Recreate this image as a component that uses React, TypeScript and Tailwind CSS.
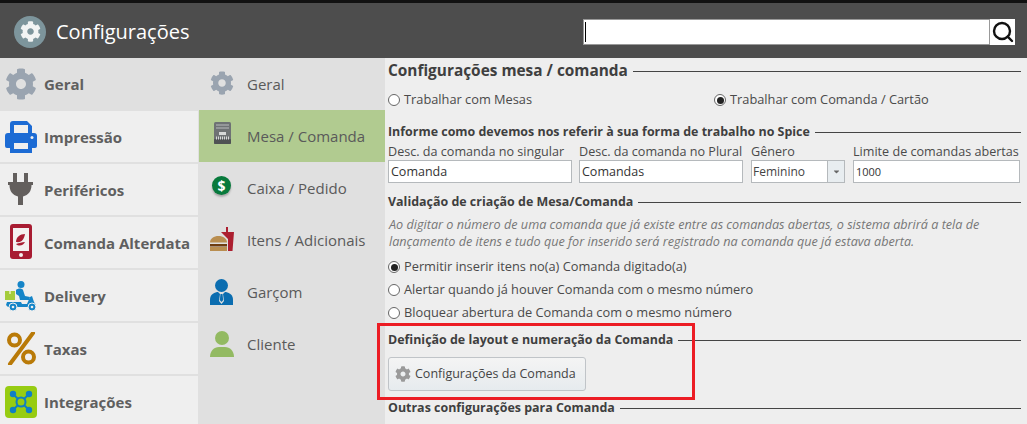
import { FaCog, FaCaretDown } from 'react-icons/fa'
import { Search } from 'lucide-react'

const font = { fontFamily: '"Open Sans", sans-serif' }

function PrinterIcon() {
    return <svg width="32" height="32" viewBox="0 0 32 32">
        <path d="M5 3a3 3 0 013-3h14l5 5v7h2a3 3 0 013 3v10a2 2 0 01-2 2h-3v5H5v-5H2a2 2 0 01-2-2V15a3 3 0 013-3h2z" fill="#1c6bd4" />
        <rect x="9" y="4" width="14" height="8" fill="#efefef" />
        <rect x="9" y="22" width="14" height="6" fill="#efefef" />
        <circle cx="27" cy="16.500" r="1.500" fill="#efefef" />
    </svg>
}

function PlugIcon() {
    return <svg width="26" height="33" viewBox="0 0 26 33" fill="#635f5d">
        <rect x="5" y="0" width="4" height="9" />
        <rect x="16" y="0" width="4" height="9" />
        <path d="M0 9h25v3h-1.500c0 6-3 10-8.500 11.500V32h-5v-8.500C4.500 22 1.500 18 1.500 12H0z" />
    </svg>
}

function PhoneIcon() {
    return <svg width="22" height="35" viewBox="0 0 22 35">
        <rect x="0" y="0" width="22" height="35" rx="3" fill="#a81c32" />
        <rect x="3" y="4" width="16" height="23" fill="#f4f0f0" />
        <circle cx="11" cy="31" r="2" fill="#f4f0f0" />
        <path d="M6 18c0-5 4-8 9-8-1 5-3 9-9 8z" fill="#a81c32" />
        <path d="M6 20c3-1 6-2 9-2-1 3-6 5-9 2z" fill="#a81c32" />
    </svg>
}

function DeliveryIcon() {
    return <svg width="32" height="31" viewBox="0 0 32 31">
        <rect x="0" y="10" width="10" height="9" fill="#a5cc3c" />
        <rect x="4" y="10" width="2" height="3" fill="#d9e89c" />
        <circle cx="16" cy="3.500" r="3.500" fill="#1585c8" />
        <path d="M11 9c2-2 6-2 7 0l2 6 5 1-1 3h-9l-1-4-3-2z" fill="#1585c8" />
        <path d="M2 21h14l1 2h5l3-7 2-1 2 6 2 3-2 2H3l-2-2z" fill="#1585c8" />
        <circle cx="8" cy="26" r="4" fill="#1585c8" stroke="#efefef" />
        <circle cx="8" cy="26" r="1.300" fill="#efefef" />
        <circle cx="27" cy="26" r="4" fill="#1585c8" stroke="#efefef" />
        <circle cx="27" cy="26" r="1.300" fill="#efefef" />
    </svg>
}

function PercentIcon() {
    return <svg width="29" height="33" viewBox="0 0 29 33" fill="none" stroke="#b97a08" strokeWidth="4">
        <circle cx="7.500" cy="8" r="5.500" />
        <circle cx="21.500" cy="25" r="5.500" />
        <path d="M26 1 3 32" strokeLinecap="round" />
    </svg>
}

function IntegrationIcon() {
    return <svg width="32" height="32" viewBox="0 0 32 32">
        <rect width="32" height="32" rx="4" fill="#97cc12" />
        <g stroke="#0f7fc4" strokeWidth="2" fill="none">
            <circle cx="16" cy="16" r="4.500" />
            <path d="M8 8l5 5M24 8l-5 5M8 24l5-5M24 24l-5-5" />
        </g>
        <g fill="#0f7fc4">
            <circle cx="8" cy="8" r="3.200" />
            <circle cx="24" cy="8" r="3.200" />
            <circle cx="8" cy="24" r="3.200" />
            <circle cx="24" cy="24" r="3.200" />
        </g>
    </svg>
}

function CalcIcon() {
    return <svg width="17" height="23" viewBox="0 0 17 23">
        <rect width="17" height="22" rx="1.500" fill="#6e7274" />
        <rect y="17" width="17" height="5" rx="1" fill="#4f5254" />
        <path d="M2 3h13M2 6h13" stroke="#b9bcbd" strokeWidth="1" />
        <rect x="5" y="10" width="7" height="3" fill="#d6d8d8" />
        <path d="M2 16h13" stroke="#d6d8d8" strokeWidth="3" strokeDasharray="1 1" />
    </svg>
}

function DollarIcon() {
    return <div className="w-[19px] h-[19px] rounded-full bg-[#087a3c] text-white text-[14px] font-bold flex items-center justify-center shadow-[0_2px_2px_rgba(0,0,0,0.25)]">$</div>
}

function FoodIcon() {
    return <svg width="24" height="24" viewBox="0 0 24 24">
        <path d="M11 5h5V0h2v5h6l-1.500 19H18V12z" fill="#ac1f30" />
        <path d="M0 15.500c0-4 4-6.500 8.500-6.500s8.500 2.500 8.500 6.500z" fill="#b98e50" />
        <rect x="0" y="17" width="17" height="2.500" fill="#6e3d10" />
        <rect x="0" y="20" width="17" height="4" fill="#b98e50" />
    </svg>
}

function WaiterIcon() {
    return <svg width="23" height="26" viewBox="0 0 23 26">
        <circle cx="11.500" cy="6.500" r="6.500" fill="#0b6db0" />
        <path d="M0 26v-5c0-5 3-7 7-8h9c4 1 7 3 7 8v5z" fill="#0b6db0" />
        <path d="M8 13h7l-2 2 1 7-2.500 3L9 22l1-7z" fill="#e0e0e0" />
        <path d="M10.500 15h2l.7 6-1.700 2-1.700-2z" fill="#0b6db0" />
    </svg>
}

function ClientIcon() {
    return <svg width="24" height="26" viewBox="0 0 24 26" fill="#93ba62">
        <circle cx="12" cy="7" r="7" />
        <path d="M0 26c0-6 4-10 9-10h6c5 0 9 4 9 10z" />
    </svg>
}

const mainItems = [
    { label: 'Geral', icon: <FaCog size={32} color="#9aa4b0" />, active: true, lift: '' },
    { label: 'Impressão', icon: <PrinterIcon />, lift: '' },
    { label: 'Periféricos', icon: <PlugIcon />, lift: '' },
    { label: 'Comanda Alterdata', icon: <PhoneIcon />, lift: 'pb-[2px]' },
    { label: 'Delivery', icon: <DeliveryIcon />, lift: 'pt-[2px]' },
    { label: 'Taxas', icon: <PercentIcon />, lift: '' },
    { label: 'Integrações', icon: <IntegrationIcon />, lift: '' },
]

const subItems = [
    { label: 'Geral', icon: <FaCog size={24} color="#9aa4b0" />, lift: 'pb-[2px]' },
    { label: 'Mesa / Comanda', icon: <CalcIcon />, active: true, lift: 'pb-[6px]' },
    { label: 'Caixa / Pedido', icon: <DollarIcon />, lift: 'pb-[5px]' },
    { label: 'Itens / Adicionais', icon: <FoodIcon />, lift: 'pb-[2px]' },
    { label: 'Garçom', icon: <WaiterIcon />, lift: 'pb-px' },
    { label: 'Cliente', icon: <ClientIcon />, lift: 'pb-px' },
]

function SectionTitle({ text, big = false, className = '' }: { text: string, big?: boolean, className?: string }) {
    return <div className={`flex items-center gap-[5px] font-bold text-[#3f3f3f] ${big ? 'text-[15.400px]' : 'text-[12.450px]'} ${className}`}>
        <span className="whitespace-nowrap">{text}</span>
        <div className="flex-1 h-px bg-[#444444]" />
    </div>
}

function Radio({ label, checked = false }: { label: string, checked?: boolean }) {
    return <div className="flex items-center gap-[4px] text-[12.800px] text-[#4a4a4a] whitespace-nowrap">
        <div className="w-[12px] h-[12px] rounded-full border border-[#666666] bg-white flex items-center justify-center">
            {checked && <div className="w-[7px] h-[7px] rounded-full bg-[#222222]" />}
        </div>
        {label}
    </div>
}

function Field({ label, value, width, valueClass = 'text-[12.500px]' }: { label: string, value: string, width: string, valueClass?: string }) {
    return <div className={`flex flex-col ${width}`}>
        <span className="text-[12.600px] leading-[17px] text-[#4a4a4a] whitespace-nowrap">{label}</span>
        <div className={`h-[23px] border border-[#b5b9bc] bg-white px-[2px] leading-[21px] text-[#333333] ${valueClass}`}>{value}</div>
    </div>
}

export default function App() {
    return <div className="relative h-[424px] w-[1027px] overflow-hidden bg-[#eeeeee]" style={font}>
        <div className="h-[58px] bg-[#4d4d4d] border-t-[3px] border-[#111111] flex items-center pl-[14px] pt-[2px]">
            <div className="w-[32px] h-[32px] rounded-full bg-[#7d959c] flex items-center justify-center">
                <FaCog size={21} color="#f2f4f4" />
            </div>
            <span className="ml-[10px] text-[20px] text-white">Configurações</span>
            <div className="ml-auto mr-[12px] flex h-[26px]">
                <div className="w-[407px] border border-[#999999] bg-white flex items-center pl-[1px]">
                    <div className="w-px h-[20px] bg-black" />
                </div>
                <div className="w-[25px] bg-white flex items-center justify-center">
                    <Search size={24} color="#111111" strokeWidth={2.4} />
                </div>
            </div>
        </div>

        <div className="flex h-[366px]">
            <div className="w-[198px] bg-[#efefef] flex flex-col">
                {mainItems.map(item => (
                    <div key={item.label} className={`h-[53px] shrink-0 flex items-center border-b-2 border-[#e0e0e0] ${item.active ? 'bg-[#e0e0e0]' : ''}`}>
                        <div className={`w-[44px] flex justify-center pl-[3px] pr-[5px] ${item.lift}`}>{item.icon}</div>
                        <span className="pt-[2px] text-[15px] font-bold text-[#5f5f5f] whitespace-nowrap">{item.label}</span>
                    </div>
                ))}
            </div>

            <div className="w-[187px] bg-[#e0e0e0] flex flex-col">
                {subItems.map(item => (
                    <div key={item.label} className={`h-[52px] flex items-center ${item.active ? 'bg-[#b1cb90] ml-px' : ''}`}>
                        <div className={`flex justify-center pr-[5px] pl-[3px] ${item.active ? 'w-[48px]' : 'w-[49px]'} ${item.lift}`}>{item.icon}</div>
                        <span className="text-[15px] text-[#5a5a5a] whitespace-nowrap">{item.label}</span>
                    </div>
                ))}
            </div>

            <div className="flex-1 pl-[3px] pr-[6px] flex flex-col pt-[2px]">
                <SectionTitle text="Configurações mesa / comanda" big className="h-[22px]" />
                <div className="flex h-[20px] mt-[8px] items-center">
                    <div className="w-[326px]"><Radio label="Trabalhar com Mesas" /></div>
                    <Radio label="Trabalhar com Comanda / Cartão" checked />
                </div>
                <SectionTitle text="Informe como devemos nos referir à sua forma de trabalho no Spice" className="h-[20px] mt-[12px]" />
                <div className="flex mt-[1px] gap-[7px]">
                    <Field label="Desc. da comanda no singular" value="Comanda" width="w-[184px]" />
                    <Field label="Desc. da comanda no Plural" value="Comandas" width="w-[164px]" />
                    <div className="flex flex-col w-[94px] ml-[1px]">
                        <span className="text-[12.600px] leading-[17px] text-[#4a4a4a]">Gênero</span>
                        <div className="h-[23px] border border-[#b5b9bc] bg-white flex text-[12px] leading-[21px] text-[#444444]">
                            <span className="flex-1 pl-[1px]">Feminino</span>
                            <div className="w-[17px] bg-[#e8edf0] border-l border-[#b5b9bc] flex items-center justify-center">
                                <FaCaretDown size={9} color="#666666" />
                            </div>
                        </div>
                    </div>
                    <div className="ml-[1px]">
                        <Field label="Limite de comandas abertas" value="1000" width="w-[167px]" valueClass="text-[11px]" />
                    </div>
                </div>
                <SectionTitle text="Validação de criação de Mesa/Comanda" className="h-[20px] mt-[9px]" />
                <p className="mt-[4px] pl-[1px] text-[12.650px] leading-[17px] italic text-[#777777]">
                    Ao digitar o número de uma comanda que já existe entre as comandas abertas, o sistema abrirá a tela de<br />
                    lançamento de itens e tudo que for inserido será registrado na comanda que já estava aberta.
                </p>
                <div className="flex flex-col gap-[3px] mt-[7px]">
                    <div className="h-[20px] flex items-center"><Radio label="Permitir inserir itens no(a) Comanda digitado(a)" checked /></div>
                    <div className="h-[20px] flex items-center"><Radio label="Alertar quando já houver Comanda com o mesmo número" /></div>
                    <div className="h-[20px] flex items-center"><Radio label="Bloquear abertura de Comanda com o mesmo número" /></div>
                </div>
                <SectionTitle text="Definição de layout e numeração da Comanda" className="h-[20px] mt-[7px]" />
                <button className="mt-[7px] self-start w-[198px] h-[34px] rounded-[3px] border border-[#c0c4c8] bg-gradient-to-b from-[#f4f4f4] to-[#e6ebee] flex items-center pl-[6px] gap-[4px] text-[12.500px] text-[#444444]">
                    <FaCog size={16} color="#9a9a9a" />
                    Configurações da Comanda
                </button>
                <SectionTitle text="Outras configurações para Comanda" className="h-[20px] mt-[7px]" />
            </div>
        </div>

        <div className="absolute left-[377px] top-[323px] w-[318px] h-[77px] border-[3px] border-[#ec1c24]" />
    </div>
}
